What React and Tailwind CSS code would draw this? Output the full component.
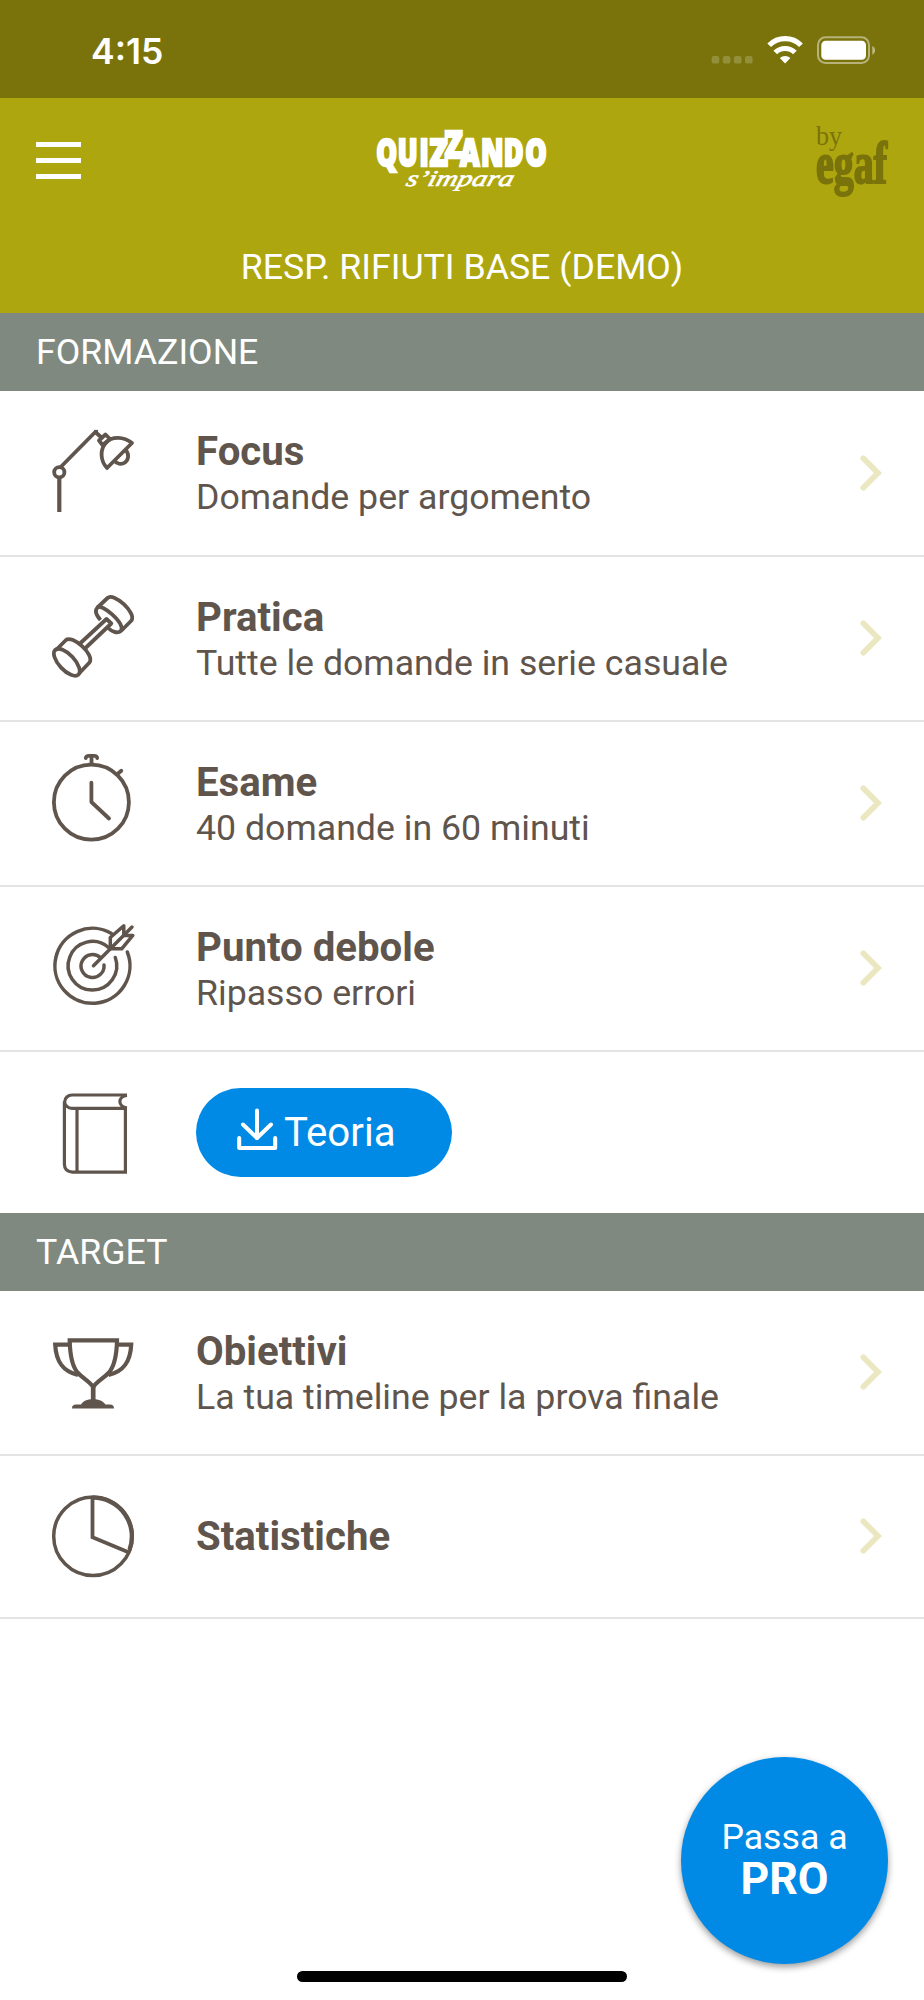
const stroke = {
  fill: 'none',
  stroke: '#5f554d',
  strokeWidth: 3.8,
  strokeLinecap: 'butt',
  strokeLinejoin: 'round',
};

function Icon({ children, className = 'mb-px', ...props }) {
  return (
    <svg viewBox="0 0 90 90" className={`h-[90px] w-[90px] shrink-0 overflow-visible ${className}`} aria-hidden="true" {...stroke} {...props}>
      {children}
    </svg>
  );
}

const LampIcon = () => (
  <Icon>
    <path d="M11.3 50V84" strokeWidth="4.2" />
    <circle cx="11.3" cy="44.3" r="5.1" />
    <path d="M12.7 39L47.3 4L53.5 9.5" />
    <path d="M46 3.8H50" />
    <path d="M57.5 6.5L62 11L54.5 17L51 12.5Z" />
    <path d="M84 15C76 8.5 63.5 8 57.8 15C51.5 22 52.5 33 59 40Z" />
    <path d="M77.5 21.5C81.5 26.5 80.5 32 77 34.5C73.5 37 68.5 36 66.5 32.5" />
  </Icon>
);

const DumbbellIcon = () => (
  <Icon>
    <path d="M52.5 27C49 23 46 18 49.5 14.5L59.5 5C66 -1 88.5 20 83.5 27.5L73.5 37.5C70 41.5 63 38 59.5 34.5" />
    <path d="M49.5 14.5C54 10.5 76 29 73.5 37.5" />
    <path d="M32 50.5L58.5 26L63.3 30.5L37.5 55" />
    <path d="M7.5 57.5L18 47C24 41.5 47 61.5 41.5 69.5L31 80.5" />
    <ellipse cx="18.8" cy="69.3" rx="17" ry="7.8" transform="rotate(47 18.8 69.3)" />
  </Icon>
);

const StopwatchIcon = () => (
  <Icon strokeLinecap="round">
    <circle cx="43.4" cy="44.2" r="37.5" />
    <path d="M43.5 -1.5V5.5" />
    <path d="M37.8 0C38 -1.8 39 -2.2 41 -2.2H46C48 -2.2 49 -1.8 49.2 0" />
    <path d="M69.5 16L73.3 12.8" />
    <path d="M43.4 24.7V44L61 60.5" />
  </Icon>
);

const TargetIcon = () => (
  <Icon strokeWidth="3.5" strokeLinecap="round">
    <path d="M63.5 10.5A37.5 37.5 0 1 0 79.3 29" />
    <path d="M60.5 24.5A24.3 24.3 0 1 0 67.3 34.5" />
    <path d="M52.5 34.7A11.5 11.5 0 1 0 56 42" />
    <path d="M45.5 42.7L84 4" />
    <path d="M62.3 25.8V14.5L75.8 2.8V12.4H84.8L73.7 25.8Z" />
  </Icon>
);

const BookIcon = () => (
  <Icon strokeWidth="3.2" className="mb-0">
    <path d="M79 7H24A7.3 6.7 0 0 0 24 20.4H77.4V84.2H24.5Q16.4 83.5 16.4 76V13.5" strokeLinejoin="miter" />
    <path d="M29 20.4V84" />
    <path d="M79 7.5C69.5 8.5 69.5 18.5 79 20" />
  </Icon>
);

const TrophyIcon = () => (
  <Icon strokeWidth="4.2" strokeLinejoin="miter" className="mb-0">
    <path d="M21.7 12.3H69C68.7 28 66.5 38 61 44.5C56 50 49 53.5 45.2 59C41.5 53.5 34.5 50 29.5 44.5C24 38 22 28 21.7 12.3Z" />
    <path d="M21.5 16.7H7.2C8 34 15 43.5 30 47" />
    <path d="M69.2 16.7H83.2C82.5 34 75.5 43.5 60.5 47" />
    <path d="M45.2 57V73" strokeWidth="4.7" />
    <path
      d="M24 80.5C24 77.5 25.5 76.5 28 76.5H33C35 73 39 71.3 45 71.3C51 71.3 55 73 57.5 76.5H62C64.5 76.5 66 77.5 66 80.5Z"
      fill="#5f554d"
      stroke="none"
    />
  </Icon>
);

const PieIcon = () => (
  <Icon strokeLinejoin="miter" className="mb-0">
    <circle cx="45" cy="44.3" r="39.3" strokeWidth="3.5" />
    <path d="M45 5.7A38.7 38.7 0 0 1 81.5 57.7" strokeWidth="4.3" />
    <path d="M44.5 6V45.3L80.5 60.2" />
  </Icon>
);

function Chevron() {
  return (
    <svg viewBox="0 0 22 36" className="mr-[42px] mb-px h-9 w-[22px] shrink-0" fill="none" stroke="#ebe8c1" strokeWidth="5.8" strokeLinecap="round" aria-hidden="true">
      <path d="M3.3 3.3L18 18L3.3 32.7" />
    </svg>
  );
}

function StatusBar() {
  return (
    <div className="flex h-[98px] items-start justify-between bg-[#7a730b] pl-[91px] pr-[48px] text-white">
      <span className="mt-[30px] font-[Inter] text-[35.5px] leading-[44px] font-semibold">4:15</span>
      <svg viewBox="0 0 165 30" className="mt-[35px] h-[30px] w-[165px]" aria-hidden="true">
        <g fill="#fff" fillOpacity="0.2">
          <rect x="0.7" y="21" width="7.6" height="7.6" rx="2.2" />
          <rect x="11.8" y="21" width="7.6" height="7.6" rx="2.2" />
          <rect x="22.9" y="21" width="7.6" height="7.6" rx="2.2" />
          <rect x="34" y="21" width="7.6" height="7.6" rx="2.2" />
        </g>
        <g fill="none" stroke="#fff" strokeWidth="5.2">
          <path d="M58.2 10.3A22.3 22.3 0 0 1 90 10.3" />
          <path d="M64.3 17.5A14 14 0 0 1 83.9 17.5" />
        </g>
        <path d="M68.8 23C72 20.2 76.3 20.2 79.4 23L74.1 28.5Z" fill="#fff" />
        <rect x="107" y="2.3" width="51" height="25.7" rx="7.5" fill="none" stroke="#fff" strokeOpacity="0.45" strokeWidth="2" />
        <rect x="110.3" y="5.8" width="44.7" height="19" rx="4.3" fill="#fff" />
        <path d="M161.3 11C165 12.7 165 18 161.3 19.7Z" fill="#fff" fillOpacity="0.5" />
      </svg>
    </div>
  );
}

function QuizzandoLogo() {
  return (
    <svg viewBox="0 0 180 72" className="h-[72px] w-[180px] overflow-visible" role="img" aria-label="Quizzando s'impara">
      <g fill="#fff" stroke="#fff" strokeWidth="2.4" fontFamily="Open Sans, sans-serif" fontWeight="800" fontSize="37.5">
        <text transform="translate(0.7 41.3) scale(0.7 1)" x="3.5 34.5 65.5">QUI</text>
        <text transform="translate(56.5 41.3) scale(0.8 1)">Z</text>
        <text transform="translate(71.5 32.9) scale(0.8 1)">Z</text>
        <text transform="translate(0.7 41.3) scale(0.72 1)" x="120 149 180.500 210.5">ANDO</text>
      </g>
      <text
        transform="translate(32 60.5) skewX(-16)"
        fill="#fff"
        stroke="#fff"
        strokeWidth="0.6"
        fontFamily="Liberation Serif, serif"
        fontStyle="italic"
        fontSize="22.5"
        textLength="107"
        lengthAdjust="spacingAndGlyphs"
      >
        s’impara
      </text>
    </svg>
  );
}

function EgafLogo() {
  return (
    <svg viewBox="0 0 76 76" className="h-[76px] w-[76px] overflow-visible" role="img" aria-label="by egaf" fill="#7a730b" fontFamily="Liberation Serif, serif">
      <text x="2" y="22" fontSize="26.5" textLength="26" lengthAdjust="spacingAndGlyphs">by</text>
      <text x="2" y="59.5" fontSize="60" fontWeight="700" textLength="71" lengthAdjust="spacingAndGlyphs" stroke="#7a730b" strokeWidth="2.2">
        egaf
      </text>
    </svg>
  );
}

function Header() {
  return (
    <header className="h-[215px] bg-[#aea60f] text-white">
      <div className="flex h-[126px] items-center justify-between pr-[34px] pl-9">
        <button className="mb-[2px] flex w-[76px] flex-col gap-[11px]" aria-label="Menu">
          <span className="h-[5px] w-[45px] bg-white" />
          <span className="h-[5px] w-[45px] bg-white" />
          <span className="h-[5px] w-[45px] bg-white" />
        </button>
        <QuizzandoLogo />
        <EgafLogo />
      </div>
      <h1 className="pt-[22px] text-center text-[35.7px] leading-[42px]">RESP. RIFIUTI BASE (DEMO)</h1>
    </header>
  );
}

function SectionTitle({ children }) {
  return <h2 className="h-[78px] bg-[#7f8980] pl-9 text-[35.7px] leading-[79px] text-white">{children}</h2>;
}

function MenuRow({ icon, title, subtitle, height = 'h-[165px]' }) {
  return (
    <a className={`flex items-center border-b-2 border-[#e4e4e4] pl-12 ${height}`}>
      {icon}
      <div className={subtitle ? 'ml-[58px] flex-1 pt-[3px]' : 'ml-[58px] flex-1'}>
        <div className="text-[40.2px] leading-[46px] font-bold">{title}</div>
        {subtitle && <div className="text-[35.7px] leading-[45px]">{subtitle}</div>}
      </div>
      <Chevron />
    </a>
  );
}

export default function App() {
  return (
    <div className="relative h-[2000px] w-[924px] overflow-hidden bg-white font-[Roboto,sans-serif] text-[#5f554d]">
      <StatusBar />
      <Header />

      <SectionTitle>FORMAZIONE</SectionTitle>
      <MenuRow icon={<LampIcon />} title="Focus" subtitle="Domande per argomento" height="h-[166px]" />
      <MenuRow icon={<DumbbellIcon />} title="Pratica" subtitle="Tutte le domande in serie casuale" />
      <MenuRow icon={<StopwatchIcon />} title="Esame" subtitle="40 domande in 60 minuti" />
      <MenuRow icon={<TargetIcon />} title="Punto debole" subtitle="Ripasso errori" />
      <div className="flex h-[161px] items-center pl-12">
        <BookIcon />
        <button className="ml-[58px] flex h-[89px] w-[256px] items-center rounded-full bg-[#008ae6] pt-[2px] pl-10 text-[40.2px] text-white">
          <svg viewBox="0 0 42 42" className="mt-[-10px] mr-[6px] h-[42px] w-[42px]" fill="none" stroke="#fff" strokeWidth="4" strokeLinecap="round" strokeLinejoin="round" aria-hidden="true">
            <path d="M21 2.5V30" />
            <path d="M7 16.5L21 30L35 16.5" />
            <path d="M3.2 30V40H39.2V30" />
          </svg>
          Teoria
        </button>
      </div>

      <SectionTitle>TARGET</SectionTitle>
      <MenuRow icon={<TrophyIcon />} title="Obiettivi" subtitle="La tua timeline per la prova finale" />
      <MenuRow icon={<PieIcon />} title="Statistiche" height="h-[163px]" />

      <button className="absolute top-[1757px] left-[681px] flex h-[207px] w-[207px] flex-col items-center justify-center rounded-full bg-[#008ae6] pb-[5px] text-white shadow-[0_3px_7px_rgba(0,0,0,0.4)]">
        <span className="text-[35.7px] leading-[42px]">Passa a</span>
        <span className="text-[44.6px] leading-[42px] font-bold">PRO</span>
      </button>
      <div className="absolute top-[1971px] left-[297px] h-[11px] w-[330px] rounded-full bg-black" />
    </div>
  );
}
